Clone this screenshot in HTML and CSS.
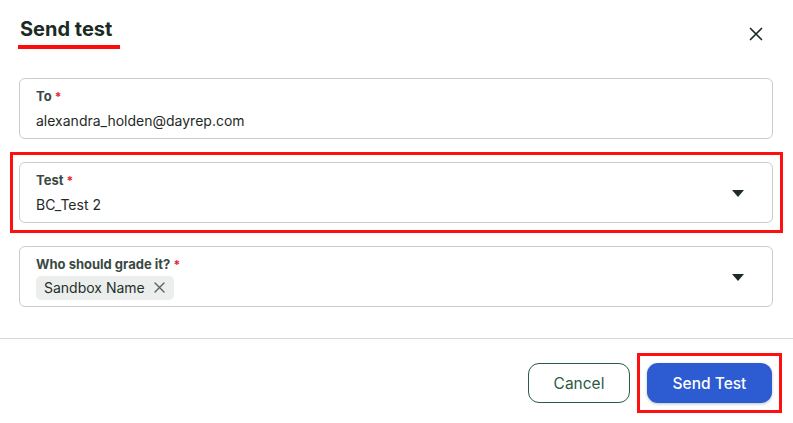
FILE: index.html
```html
<!DOCTYPE html>
<html>
<head>
<meta charset="utf-8">
<link rel="stylesheet" href="styles.css">
</head>
<body>
<div class="dialog">
  <header class="header">
    <h1 class="title">Send test</h1>
    <button class="close" aria-label="Close">
      <svg width="14" height="14" viewBox="0 0 14 14"><path d="M1.5 1.5L12.5 12.5M12.5 1.5L1.5 12.5" stroke="#1d2b26" stroke-width="1.7" stroke-linecap="round"/></svg>
    </button>
  </header>
  <section class="fields">
    <div class="field">
      <div class="field-body">
        <div class="label">To <span class="req">*</span></div>
        <div class="value">alexandra_holden@dayrep.com</div>
      </div>
    </div>
    <div class="field highlight">
      <div class="field-body">
        <div class="label">Test <span class="req">*</span></div>
        <div class="value">BC_Test 2</div>
      </div>
      <span class="caret"></span>
    </div>
    <div class="field grade">
      <div class="field-body">
        <div class="label">Who should grade it? <span class="req">*</span></div>
        <div class="chips">
          <span class="chip">Sandbox Name
            <svg width="11" height="11" viewBox="0 0 11 11"><path d="M1 1L10 10M10 1L1 10" stroke="#555f5b" stroke-width="1.3" stroke-linecap="round"/></svg>
          </span>
        </div>
      </div>
      <span class="caret"></span>
    </div>
  </section>
  <footer class="footer">
    <button class="btn btn-secondary">Cancel</button>
    <button class="btn btn-primary highlight-btn">Send Test</button>
  </footer>
</div>
</body>
</html>
```
FILE: styles.css
```css
* { box-sizing: border-box; }
html, body { margin: 0; padding: 0; background: #fff; }
body {
  font-family: Inter, "Noto Sans", "Liberation Sans", sans-serif;
  color: #1d2b26;
  width: 793px;
  height: 423px;
  overflow: hidden;
}
.dialog { display: flex; flex-direction: column; }
.header {
  display: flex;
  justify-content: space-between;
  align-items: flex-start;
  padding: 17px 30px 0 18px;
  height: 78px;
}
.title {
  margin: 0;
  font-size: 20px;
  line-height: 24px;
  font-weight: 700;
  color: #1b2a24;
  display: inline-block;
  padding: 0 8px 4px 2px;
  border-bottom: 4px solid #ff0a0a;
}
.close {
  margin-top: 10px;
  border: 0;
  background: none;
  padding: 0;
  width: 14px;
  height: 14px;
  display: flex;
}
.fields {
  display: flex;
  flex-direction: column;
  gap: 23px;
  padding: 0 20px 0 19px;
}
.field {
  position: relative;
  display: flex;
  align-items: center;
  border: 1px solid #c8cdcb;
  border-radius: 6px;
  padding: 9px 28px 8px 16px;
  height: 61px;
}
.field.highlight::before {
  content: "";
  position: absolute;
  top: -11px;
  bottom: -11px;
  left: -10px;
  right: -11px;
  border: 3px solid #ff1010;
  pointer-events: none;
}
.field.grade { padding-bottom: 7px; }
.field-body { flex: 1; display: flex; flex-direction: column; }
.label {
  font-size: 13px;
  line-height: 16px;
  font-weight: 700;
  color: #3a4943;
}
.req { color: #e8202a; font-size: 12px; }
.value {
  margin-top: 6px;
  font-size: 14px;
  line-height: 20px;
  color: #1f2a26;
}
.chips { margin-top: 3px; display: flex; }
.chip {
  display: inline-flex;
  align-items: center;
  gap: 9px;
  height: 24px;
  padding: 0 9px 0 8px;
  background: #eceeed;
  border-radius: 5px;
  font-size: 14px;
  color: #24302c;
}
.caret {
  width: 0;
  height: 0;
  border-left: 6px solid transparent;
  border-right: 6px solid transparent;
  border-top: 7px solid #1d2b26;
}
.footer {
  margin-top: 31px;
  border-top: 1px solid #d3d7d5;
  display: flex;
  justify-content: flex-end;
  gap: 17px;
  padding: 24px 21px 0 0;
}
.btn {
  font-family: Inter, "Noto Sans", sans-serif;
  font-size: 15.5px;
  height: 40px;
  border-radius: 11px;
  cursor: pointer;
}
.btn-secondary {
  width: 102px;
  background: #fff;
  border: 1px solid #2c5a43;
  color: #2c5a43;
  margin-left: 1px;
}
.btn-primary {
  position: relative;
  width: 125px;
  background: #2c5bd2;
  border: 0;
  color: #fff;
  font-weight: 500;
  box-shadow: 0 1px 3px rgba(0,0,0,0.25);
}
.highlight-btn::before {
  content: "";
  position: absolute;
  top: -10px;
  bottom: -10px;
  left: -10px;
  right: -10px;
  border: 3px solid #ff1010;
  pointer-events: none;
}
```
